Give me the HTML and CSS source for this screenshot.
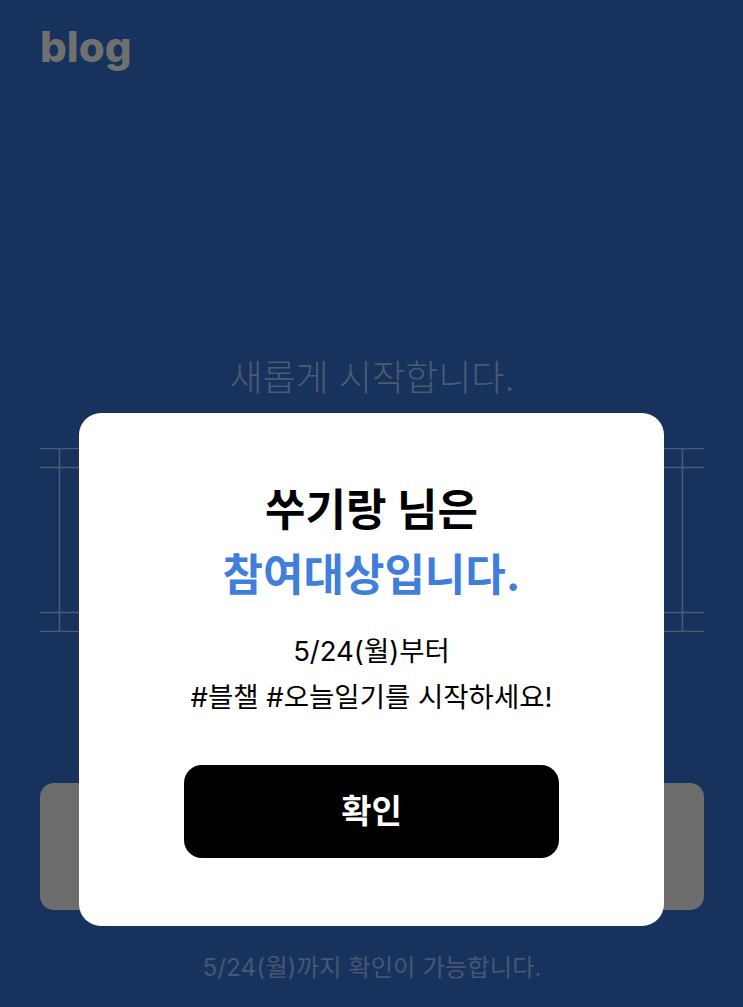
FILE: index.html
```html
<!DOCTYPE html>
<html lang="ko">
<head>
<meta charset="utf-8">
<title>blog</title>
<link rel="stylesheet" href="styles.css">
</head>
<body>
<main class="screen">
  <header class="logo">blog</header>
  <h2 class="headline">새롭게 시작합니다.</h2>
  <div class="frame" aria-hidden="true">
    <svg class="frame-lines" width="664" height="184" viewBox="0 0 664 184">
      <path d="M0 .5H664M0 19.5H664M0 164.5H664M0 183.5H664M19.5 0V184M642.5 0V184"/>
    </svg>
  </div>
  <div class="cta"></div>
  <p class="footnote">5/24(월)까지 확인이 가능합니다.</p>
</main>
<section class="modal">
  <h1 class="modal-title">쑤기랑 님은<br><span class="accent">참여대상입니다.</span></h1>
  <p class="modal-text">5/24(월)부터<br>#블챌 #오늘일기를 시작하세요!</p>
  <button class="confirm" type="button">확인</button>
</section>
</body>
</html>
```
FILE: styles.css
```css
* { box-sizing: border-box; }
html, body { margin: 0; height: 100%; }
body {
  position: relative;
  width: 743px;
  height: 1007px;
  overflow: hidden;
  background: #17325c;
  font-family: Inter, "Noto Sans CJK KR", "Noto Sans", sans-serif;
}
.screen {
  display: flex;
  flex-direction: column;
  padding: 0 39px 0 40px;
  height: 100%;
}
.logo {
  margin-top: 22px;
  height: 55px;
  font-family: Inter, sans-serif;
  font-weight: 800;
  font-size: 42px;
  line-height: 50px;
  color: #70706f;
}
.headline {
  margin: 274px 0 0;
  height: 54px;
  text-align: center;
  font-size: 36px;
  line-height: 54px;
  font-weight: 300;
  color: #4e5a72;
}
.frame { margin-top: 43px; height: 184px; }
.frame-lines { display: block; }
.frame-lines path { fill: none; stroke: #4f5a72; stroke-width: 1.5; }
.cta {
  margin-top: 151px;
  height: 127px;
  border-radius: 14px;
  background: #6c6c6c;
}
.footnote {
  margin: 37px 0 0;
  text-align: center;
  font-size: 24.4px;
  line-height: 40px;
  color: #475672;
}
.modal {
  position: absolute;
  left: 79px;
  top: 413px;
  width: 585px;
  height: 513px;
  padding-top: 65px;
  display: flex;
  flex-direction: column;
  align-items: center;
  background: #fff;
  border-radius: 22px;
}
.modal-title {
  margin: 0;
  text-align: center;
  font-size: 44px;
  line-height: 65px;
  font-weight: 700;
  color: #000;
}
.accent { color: #3f7fdb; }
.modal-text {
  margin: 20px 0 0;
  text-align: center;
  font-size: 27.5px;
  line-height: 46px;
  color: #000;
}
.confirm {
  margin-top: 45px;
  width: 375px;
  height: 93px;
  padding: 0 0 6px;
  border: 0;
  border-radius: 18px;
  background: #000;
  color: #fff;
  font-family: inherit;
  font-size: 33px;
  font-weight: 700;
}
```
